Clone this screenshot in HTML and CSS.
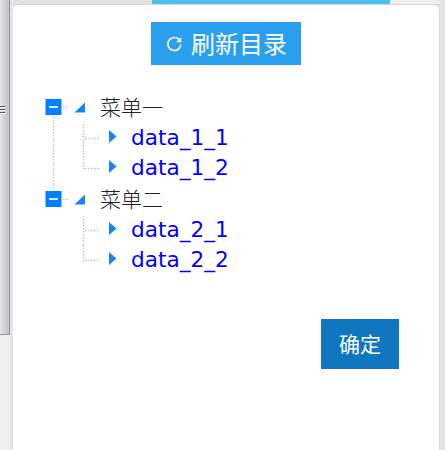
FILE: index.html
```
<!DOCTYPE html>
<html lang="zh-CN">
<head>
<meta charset="utf-8">
<title>菜单</title>
<link rel="stylesheet" href="styles.css">
</head>
<body>
<div class="app">
  <aside class="side">
    <div class="splitter"><div class="grip"><i></i><i></i><i></i></div></div>
  </aside>
  <main class="main">
    <div class="tabs"><div class="tab"></div></div>
    <section class="panel">
      <button class="refresh">
        <svg width="18" height="18" viewBox="0 0 18 18"><path d="M13.300 4.800A6.500 6.500 0 1 0 14.800 9.500" fill="none" stroke="#fff" stroke-width="1.700"/><path d="M15.300 2v5.200h-5.200z" fill="#fff"/></svg>
        <span>刷新目录</span>
      </button>
      <ul class="tree">
        <li class="row">
          <svg class="fold" viewBox="0 0 24 31"><rect x="0.500" y="7" width="16" height="16" fill="#007fff"/><path d="M4 15h9" stroke="#fff" stroke-width="1.700"/><path class="dots" d="M18 15.500h6M8.500 25v6"/></svg>
          <svg class="cell" viewBox="0 0 31 31"><path d="M16 10.500v10H5.500z" fill="#1585f5"/></svg>
          <span class="folder">菜单一</span>
        </li>
        <li class="row">
          <svg class="cell" viewBox="0 0 31 31"><path class="dots" d="M8.500 0v31"/></svg>
          <svg class="cell" viewBox="0 0 31 31"><path class="dots" d="M7.500 1v30M9 15.500h14"/></svg>
          <svg class="caret" viewBox="0 0 24 31"><path d="M2 7l7.500 6.500L2 20z" fill="#1585f5"/></svg>
          <a class="leaf">data_1_1</a>
        </li>
        <li class="row">
          <svg class="cell" viewBox="0 0 31 31"><path class="dots" d="M8.500 0v31"/></svg>
          <svg class="cell" viewBox="0 0 31 31"><path class="dots" d="M7.500 0v16M9 15.500h14"/></svg>
          <svg class="caret" viewBox="0 0 24 31"><path d="M2 7l7.500 6.500L2 20z" fill="#1585f5"/></svg>
          <a class="leaf">data_1_2</a>
        </li>
        <li class="row">
          <svg class="fold" viewBox="0 0 24 31"><rect x="0.500" y="7" width="16" height="16" fill="#007fff"/><path d="M4 15h9" stroke="#fff" stroke-width="1.700"/><path class="dots" d="M18 15.500h6M8.500 0v6"/></svg>
          <svg class="cell" viewBox="0 0 31 31"><path d="M16 10.500v10H5.500z" fill="#1585f5"/></svg>
          <span class="folder">菜单二</span>
        </li>
        <li class="row">
          <svg class="cell" viewBox="0 0 31 31"></svg>
          <svg class="cell" viewBox="0 0 31 31"><path class="dots" d="M7.500 1v30M9 15.500h14"/></svg>
          <svg class="caret" viewBox="0 0 24 31"><path d="M2 7l7.500 6.500L2 20z" fill="#1585f5"/></svg>
          <a class="leaf">data_2_1</a>
        </li>
        <li class="row">
          <svg class="cell" viewBox="0 0 31 31"></svg>
          <svg class="cell" viewBox="0 0 31 31"><path class="dots" d="M7.500 0v16M9 15.500h14"/></svg>
          <svg class="caret" viewBox="0 0 24 31"><path d="M2 7l7.500 6.500L2 20z" fill="#1585f5"/></svg>
          <a class="leaf">data_2_2</a>
        </li>
      </ul>
      <button class="confirm">确定</button>
    </section>
  </main>
</div>
</body>
</html>
```
FILE: styles.css
```
* { box-sizing: border-box; }
body { margin: 0; font-family: "Noto Sans CJK SC", sans-serif; }
button { border: 0; padding: 0; font-family: inherit; color: #fff; }
.app { display: flex; height: 450px; overflow: hidden; background: #e4e4e4; }
.side { width: 13px; background: linear-gradient(90deg, #efefef 0 10px, #e4e4e4 10px); }
.splitter {
  display: flex; align-items: flex-start;
  width: 10px; height: 335px; padding-top: 106px;
  background: linear-gradient(90deg, #e6e6e8, #d4d4d8 4px, #c3c3c8 8px, #d2d2d4 9px);
  border-right: 1px solid #8e8e8e;
  border-bottom: 1px solid #999;
}
.grip { display: flex; flex-direction: column; gap: 1px; width: 5px; }
.grip i { height: 2px; border-bottom: 1px solid #f8f8f8; background: #555; }
.main { width: 427px; }
.tabs { height: 5px; padding-left: 139px; background: linear-gradient(90deg, #e1e1e1 139px, #eee 377px); border-bottom: 1px solid #d8d8d8; }
.tab { width: 238px; height: 4px; background: #4dc1e8; }
.panel {
  display: flex; flex-direction: column; height: 460px; padding-top: 17px;
  background: #fff; border-radius: 6px; border-right: 1px solid #d9d9d9;
}
.refresh {
  display: flex; align-items: center; gap: 7px;
  width: 150px; height: 43px; margin-left: 138px; padding-left: 15px;
  background: #2a9fee; font-size: 24px; line-height: 41px;
}
.refresh svg { flex: none; margin-top: 1px; }
.refresh span { white-space: nowrap; height: 43px; }
.tree { margin: 27px 0 0 32px; padding: 0; list-style: none; }
.row { display: flex; height: 30.7px; }
.row svg { flex: none; height: 31px; }
.cell { width: 31px; }
.fold, .caret { width: 24px; }
.dots { fill: none; stroke: #c4c4c4; stroke-width: 1.5; stroke-dasharray: 1.5 1.5; }
.folder { font-size: 21px; line-height: 28px; color: #222; font-weight: 300; }
.leaf { font-family: "DejaVu Sans", sans-serif; font-size: 21.6px; line-height: 29px; color: #00f; }
.confirm {
  width: 78px; height: 50px; margin: 43px 0 0 308px; padding-bottom: 2px;
  background: #0e77bf; font-size: 21px; line-height: 48px;
}
```
